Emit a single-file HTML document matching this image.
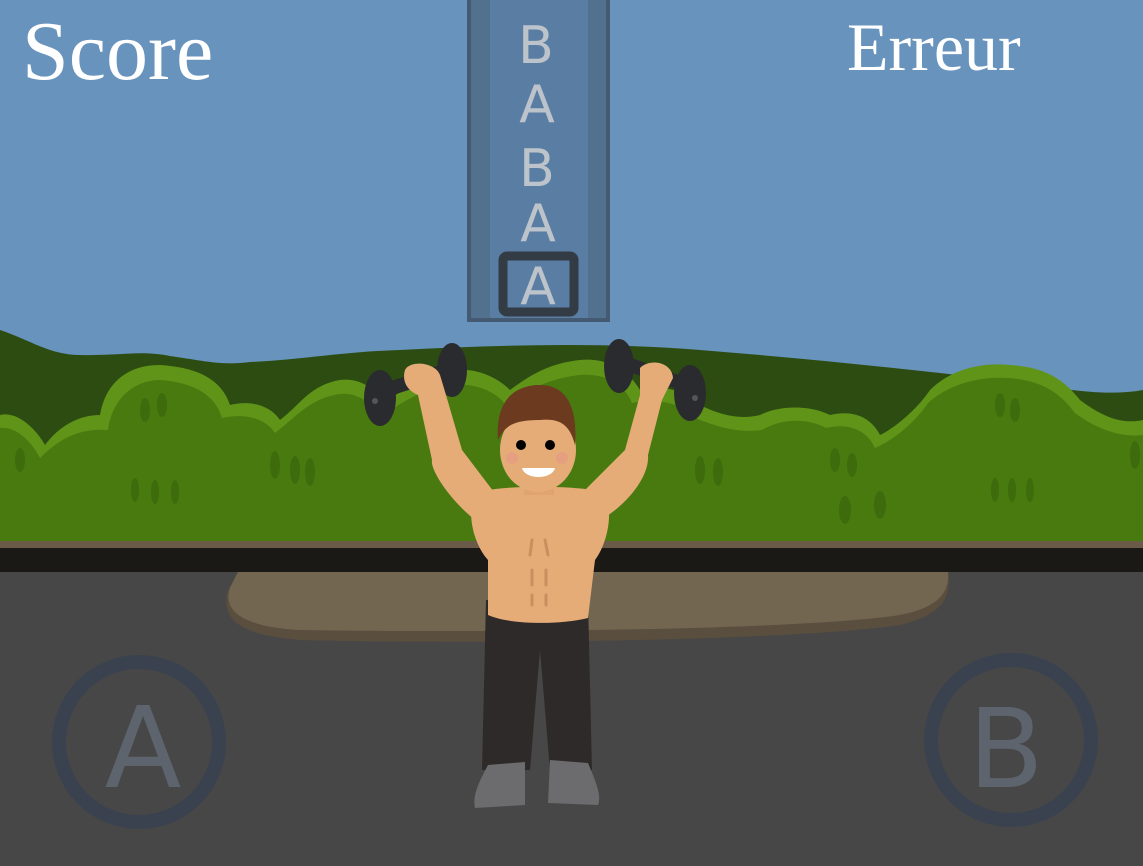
<!DOCTYPE html>
<html><head><meta charset="utf-8"><style>
html,body{margin:0;padding:0;background:#6792bd;overflow:hidden}
svg{display:block}
</style></head><body>
<svg width="1143" height="866" viewBox="0 0 1143 866" xmlns="http://www.w3.org/2000/svg">
<rect width="1143" height="866" fill="#6893bd"/>
<path d="M0 330 C30 340 50 355 80 355 C120 356 140 350 170 356 C200 360 220 366 250 362 C300 360 340 352 400 350 C500 345 600 342 700 350 C800 358 900 368 1000 380 C1050 386 1100 398 1143 390 L1143 560 L0 560 Z" fill="#2c4c12"/>
<path d="M0 415 C20 410 40 435 45 445 C60 425 80 415 100 415 C105 385 125 365 160 365 C190 367 220 375 230 405 C250 400 270 405 280 420 C300 405 310 385 340 380 C365 377 380 395 385 405 C400 390 420 375 450 370 C480 367 500 380 510 390 C530 375 550 363 580 360 C610 357 630 373 640 390 C660 385 690 390 700 405 C720 415 740 420 760 415 C780 405 810 405 830 415 C850 410 870 415 880 435 C900 425 920 405 930 390 C950 370 980 362 1010 365 C1040 367 1060 375 1080 400 C1100 415 1120 425 1143 420 L1143 545 L0 545 Z" fill="#5f9419"/>
<path d="M0 428 C20 426 35 448 40 458 C60 438 80 428 108 430 C112 398 135 380 160 380 C190 382 215 393 222 418 C245 413 265 418 275 433 C295 418 310 398 340 394 C362 392 375 408 380 418 C400 403 420 390 450 385 C478 382 498 394 505 404 C528 390 550 378 580 375 C608 373 625 386 632 403 C655 398 685 403 695 418 C720 428 740 433 762 430 C782 418 808 418 826 428 C846 423 866 428 875 448 C898 438 918 418 928 403 C948 385 978 376 1008 378 C1038 380 1058 390 1075 413 C1095 428 1120 438 1143 435 L1143 545 L0 545 Z" fill="#487a0f"/>
<g fill="#3e6b0c">
<ellipse cx="145" cy="410" rx="5" ry="12"/><ellipse cx="162" cy="405" rx="5" ry="12"/>
<ellipse cx="20" cy="460" rx="5" ry="12"/><ellipse cx="135" cy="490" rx="4" ry="12"/><ellipse cx="155" cy="492" rx="4" ry="12"/><ellipse cx="175" cy="492" rx="4" ry="12"/>
<ellipse cx="275" cy="465" rx="5" ry="14"/><ellipse cx="295" cy="470" rx="5" ry="14"/><ellipse cx="310" cy="472" rx="5" ry="14"/>
<ellipse cx="700" cy="470" rx="5" ry="14"/><ellipse cx="718" cy="472" rx="5" ry="14"/>
<ellipse cx="835" cy="460" rx="5" ry="12"/><ellipse cx="852" cy="465" rx="5" ry="12"/>
<ellipse cx="845" cy="510" rx="6" ry="14"/><ellipse cx="880" cy="505" rx="6" ry="14"/>
<ellipse cx="1000" cy="405" rx="5" ry="12"/><ellipse cx="1015" cy="410" rx="5" ry="12"/>
<ellipse cx="995" cy="490" rx="4" ry="12"/><ellipse cx="1012" cy="490" rx="4" ry="12"/><ellipse cx="1030" cy="490" rx="4" ry="12"/>
<ellipse cx="1135" cy="455" rx="5" ry="14"/>
</g>
<rect x="0" y="541" width="1143" height="8" fill="#6a5a48"/>
<rect x="0" y="548" width="1143" height="24" fill="#1b1915"/>
<rect x="0" y="572" width="1143" height="294" fill="#474747"/>
<path d="M238 572 L948 572 C952 600 940 615 900 625 C800 640 500 645 300 640 C240 635 220 620 228 590 Z" fill="#5a4e3e"/>
<path d="M238 572 L948 572 C950 595 935 608 900 615 C800 630 500 633 300 630 C245 627 222 612 230 588 Z" fill="#736651"/>
<rect x="467" y="0" width="143" height="322" fill="#435a72"/>
<rect x="471" y="0" width="135" height="318" fill="#52718f"/>
<rect x="490" y="0" width="98" height="318" fill="#5a7ea3"/>
<g font-family="DejaVu Sans, sans-serif" font-size="52" fill="#bcc3cb" text-anchor="middle">
<text x="536" y="63">B</text>
<text x="537" y="122">A</text>
<text x="537" y="186">B</text>
<text x="538" y="241">A</text>
<text x="538" y="304">A</text>
</g>
<rect x="503" y="256" width="71" height="56" rx="4" fill="none" stroke="#333b45" stroke-width="9"/>
<text x="22" y="79" font-family="Liberation Serif, serif" font-size="84" fill="#fff">Score</text>
<text x="847" y="70" font-family="Liberation Serif, serif" font-size="68" fill="#fff">Erreur</text>
<circle cx="139" cy="742" r="80" fill="none" stroke="#3a4250" stroke-width="14"/>
<circle cx="1011" cy="740" r="80" fill="none" stroke="#3a4250" stroke-width="14"/>
<text x="143" y="787" font-family="DejaVu Sans, sans-serif" font-size="112" fill="#5d646d" text-anchor="middle">A</text>
<text x="1006" y="787" font-family="DejaVu Sans, sans-serif" font-size="110" fill="#5d646d" text-anchor="middle">B</text>
<g fill="#2a2b2e">
<rect x="385" y="372" width="70" height="14" rx="6" transform="rotate(-18 420 380)"/>
<ellipse cx="380" cy="398" rx="16" ry="28"/>
<ellipse cx="452" cy="370" rx="15" ry="27"/>
<rect x="615" y="365" width="75" height="14" rx="6" transform="rotate(20 650 372)"/>
<ellipse cx="619" cy="366" rx="15" ry="27"/>
<ellipse cx="690" cy="393" rx="16" ry="28"/>
</g>
<circle cx="375" cy="401" r="3" fill="#555"/><circle cx="695" cy="398" r="3" fill="#555"/>
<path d="M486 600 L588 600 L592 770 L550 770 L540 650 L530 770 L482 770 Z" fill="#2e2a29"/>
<path d="M488 765 L525 762 L525 805 L475 808 C472 795 480 780 488 765 Z" fill="#6c6b6d"/>
<path d="M550 760 L588 763 C595 780 602 795 598 805 L548 803 Z" fill="#6c6b6d"/>
<g fill="#e5ac78">
<path d="M405 370 C410 360 435 362 440 375 L446 395 L462 450 L500 500 L475 520 C450 500 430 470 432 460 L418 395 C406 390 402 380 405 370 Z"/>
<path d="M640 368 C650 358 672 362 673 378 L662 400 L648 455 C650 480 620 510 600 520 L575 500 L625 450 L640 395 Z"/>
<path d="M480 492 C500 485 580 485 600 492 C615 500 610 540 595 560 L588 618 C560 625 510 625 488 615 L488 560 C470 540 465 500 480 492 Z"/>
<rect x="524" y="470" width="30" height="25" fill="#dfa470"/>
<ellipse cx="538" cy="450" rx="38" ry="42"/>
</g>
<path d="M498 440 C495 400 515 385 540 385 C565 385 578 405 575 445 C570 425 560 418 540 420 C515 420 505 425 498 440 Z" fill="#6b3a1f"/>
<circle cx="521" cy="445" r="5" fill="#000"/><circle cx="550" cy="445" r="5" fill="#000"/>
<circle cx="512" cy="458" r="6" fill="#e89a86" opacity=".7"/><circle cx="562" cy="458" r="6" fill="#e89a86" opacity=".7"/>
<path d="M522 468 L555 468 C552 480 525 480 522 468 Z" fill="#fff"/>
<g stroke="#c98f5e" stroke-width="3" fill="none" stroke-linecap="round">
<path d="M532 540 L530 555"/><path d="M545 540 L548 555"/>
<path d="M532 570 L532 585"/><path d="M546 570 L546 585"/>
<path d="M532 595 L532 605"/><path d="M546 595 L546 605"/>
</g>
</svg>
</body></html>
